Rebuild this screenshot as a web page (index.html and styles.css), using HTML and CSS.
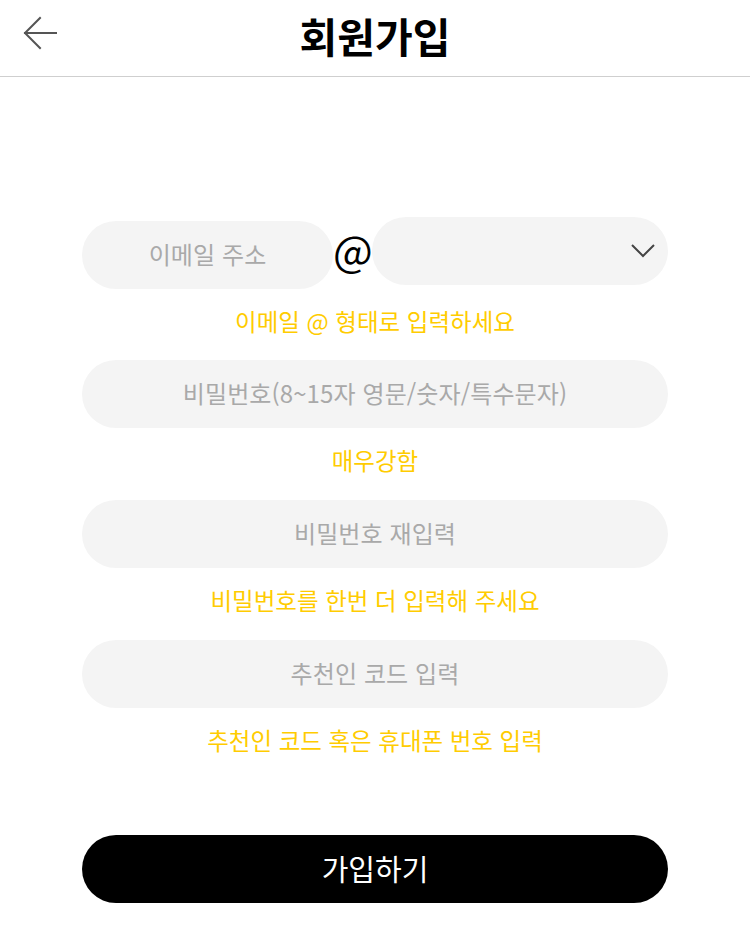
FILE: index.html
```html
<!DOCTYPE html>
<html lang="ko">
<head>
<meta charset="utf-8">
<title>회원가입</title>
<link rel="stylesheet" href="styles.css">
</head>
<body>
<header class="header">
  <button class="back" type="button" aria-label="뒤로">
    <svg width="34" height="34" viewBox="0 0 34 34" fill="none" stroke="#555" stroke-width="2" stroke-linecap="square">
      <path d="M17 2 L2 17 L17 32"/>
      <path d="M2 17 H33"/>
    </svg>
  </button>
  <h1 class="title">회원가입</h1>
</header>
<main class="form">
  <div class="group group-email">
    <div class="email-row">
      <input class="field field-email" type="text" placeholder="이메일 주소">
      <span class="at">@</span>
      <div class="field field-select">
        <svg width="24" height="16" viewBox="0 0 24 16" fill="none" stroke="#444" stroke-width="2">
          <path d="M1 2 L12 13 L23 2"/>
        </svg>
      </div>
    </div>
    <p class="hint">이메일 @ 형태로 입력하세요</p>
  </div>
  <div class="group">
    <input class="field" type="password" placeholder="비밀번호(8~15자 영문/숫자/특수문자)">
    <p class="hint">매우강함</p>
  </div>
  <div class="group">
    <input class="field" type="password" placeholder="비밀번호 재입력">
    <p class="hint">비밀번호를 한번 더 입력해 주세요</p>
  </div>
  <div class="group group-last">
    <input class="field" type="text" placeholder="추천인 코드 입력">
    <p class="hint">추천인 코드 혹은 휴대폰 번호 입력</p>
  </div>
  <button class="submit" type="button">가입하기</button>
</main>
</body>
</html>
```

FILE: styles.css
```css
* {
  box-sizing: border-box;
}

html, body {
  margin: 0;
  padding: 0;
  background: #fff;
}

body {
  font-family: "Noto Sans CJK KR", "Noto Sans", sans-serif;
  width: 750px;
}

.header {
  height: 77px;
  border-bottom: 1px solid #cfcfcf;
  display: flex;
  align-items: center;
  justify-content: center;
  position: relative;
}

.back {
  position: absolute;
  left: 23px;
  top: 16px;
  width: 34px;
  height: 34px;
  padding: 0;
  margin: 0;
  border: 0;
  background: none;
  display: flex;
}

.title {
  margin: 0 0 6px;
  font-size: 41px;
  font-weight: 700;
  color: #000;
  line-height: 1;
}

.form {
  width: 586px;
  margin: 0 auto;
  padding-top: 140px;
  display: flex;
  flex-direction: column;
}

.group {
  display: flex;
  flex-direction: column;
  margin-bottom: 24px;
}

.group-email {
  margin-bottom: 23px;
}

.group-last {
  margin-bottom: 79px;
}

.email-row {
  display: flex;
  align-items: flex-start;
  height: 72px;
}

.field {
  height: 68px;
  width: 100%;
  border: 0;
  border-radius: 34px;
  background: #f4f4f4;
  font-family: "Noto Sans CJK KR", "Noto Sans", sans-serif;
  font-size: 24px;
  letter-spacing: 0.1px;
  color: #333;
  text-align: center;
  outline: none;
  padding: 0 16px 4px;
  margin: 0;
}

.field::placeholder {
  color: #a9a9a9;
}

.field-email {
  width: 251px;
  flex: none;
  margin-top: 4px;
}

.at {
  width: 39px;
  flex: none;
  text-align: center;
  font-size: 42px;
  line-height: 64px;
  color: #000;
  font-family: "Noto Sans CJK KR", "Noto Sans", sans-serif;
}

.field-select {
  flex: 1;
  width: auto;
  display: flex;
  align-items: center;
  justify-content: flex-end;
  padding: 0 13px 0 0;
}

.hint {
  margin: 16px 0 0;
  height: 32px;
  line-height: 32px;
  text-align: center;
  font-size: 23.5px;
  color: #ffcc00;
}

.submit {
  height: 68px;
  width: 100%;
  border: 0;
  border-radius: 34px;
  background: #000;
  color: #fff;
  font-family: "Noto Sans CJK KR", "Noto Sans", sans-serif;
  font-size: 29px;
  padding: 0 0 2px;
}
```
